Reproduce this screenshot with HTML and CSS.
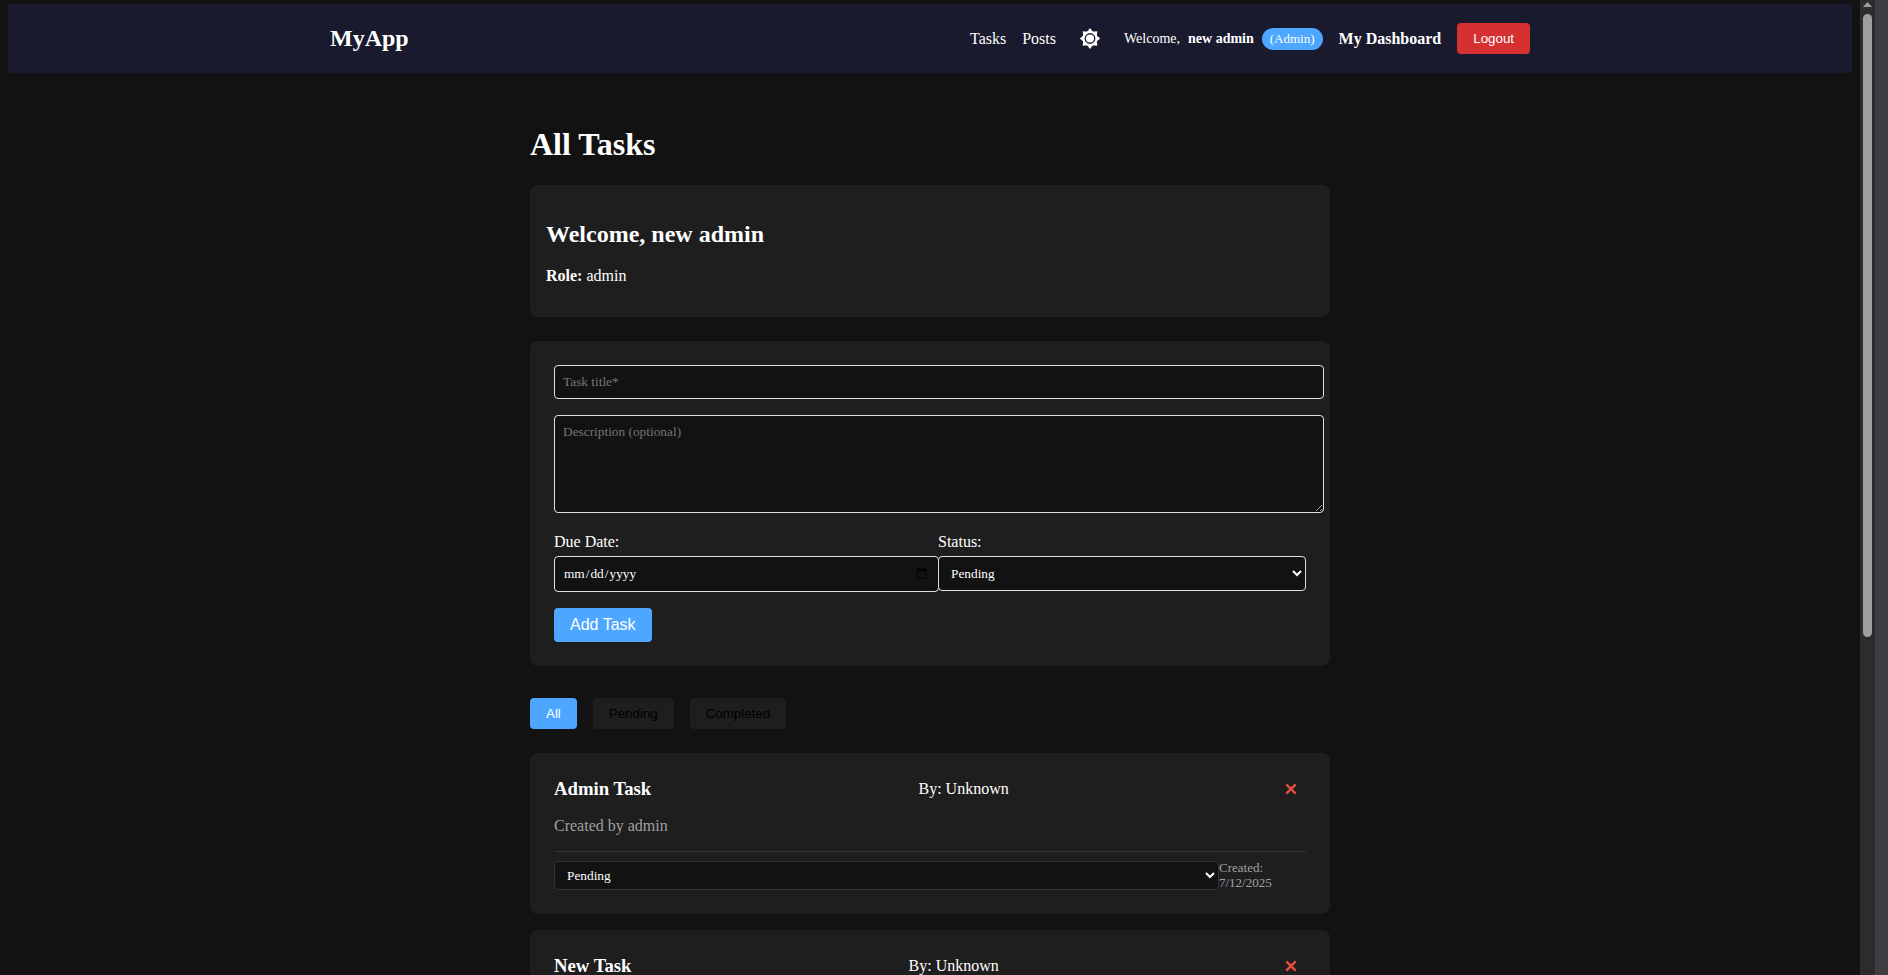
FILE: index.html
```html
<!DOCTYPE html>
<html lang="en">
<head>
<meta charset="utf-8">
<title>MyApp</title>
<link rel="stylesheet" href="styles.css">
</head>
<body>
<div class="page">
  <nav class="navbar">
    <div class="navbar-inner">
      <a class="logo" href="#">MyApp</a>
      <div class="nav-links">
        <a href="#">Tasks</a>
        <a href="#">Posts</a>
        <button class="theme-toggle" type="button" aria-label="Toggle theme">
          <svg width="20" height="21" viewBox="-10 -10.5 20 21"><g fill="#fff"><path id="ray" d="M-3.4-6 0-10.4 3.4-6Z"/><use href="#ray" transform="rotate(45)"/><use href="#ray" transform="rotate(90)"/><use href="#ray" transform="rotate(135)"/><use href="#ray" transform="rotate(180)"/><use href="#ray" transform="rotate(225)"/><use href="#ray" transform="rotate(270)"/><use href="#ray" transform="rotate(315)"/><circle r="4.1"/></g><circle r="6.4" fill="none" stroke="#fff" stroke-width="2"/></svg>
        </button>
        <div class="user-info"><span>Welcome,</span><strong>new admin</strong><span class="badge">(Admin)</span></div>
        <a class="dashboard-link" href="#">My Dashboard</a>
        <button class="btn logout" type="button">Logout</button>
      </div>
    </div>
  </nav>
  <main class="content">
    <h1>All Tasks</h1>
    <section class="card welcome">
      <h2>Welcome, new admin</h2>
      <p><strong>Role:</strong> admin</p>
    </section>
    <form class="card task-form">
      <input class="field wide" type="text" placeholder="Task title*" aria-label="Task title">
      <textarea class="field wide description" placeholder="Description (optional)" aria-label="Description"></textarea>
      <div class="form-row">
        <div class="group group-date">
          <label for="due">Due Date:</label>
          <input class="field" id="due" type="date">
        </div>
        <div class="group group-status">
          <label for="status">Status:</label>
          <select class="field" id="status"><option>Pending</option><option>Completed</option></select>
        </div>
      </div>
      <button class="btn add" type="button">Add Task</button>
    </form>
    <div class="filters">
      <button class="btn filter active" type="button">All</button>
      <button class="btn filter" type="button">Pending</button>
      <button class="btn filter" type="button">Completed</button>
    </div>
    <div class="tasks">
      <article class="card task">
        <header class="task-header">
          <h3>Admin Task</h3>
          <span>By: Unknown</span>
          <button class="delete" type="button" aria-label="Delete Admin Task"><svg width="12" height="12" viewBox="0 0 12 12"><path d="M1.3 1.3 10.7 10.7M10.7 1.3 1.3 10.7"/></svg></button>
        </header>
        <p class="task-text">Created by admin</p>
        <footer class="task-footer">
          <select class="field compact" aria-label="Status of Admin Task"><option>Pending</option><option>Completed</option></select>
          <span class="created">Created: 7/12/2025</span>
        </footer>
      </article>
      <article class="card task">
        <header class="task-header">
          <h3>New Task</h3>
          <span>By: Unknown</span>
          <button class="delete" type="button" aria-label="Delete New Task"><svg width="12" height="12" viewBox="0 0 12 12"><path d="M1.3 1.3 10.7 10.7M10.7 1.3 1.3 10.7"/></svg></button>
        </header>
      </article>
    </div>
  </main>
</div>
<div class="scrollbar" aria-hidden="true">
  <svg width="9" height="5" viewBox="0 0 9 5"><path d="M4.5 0 9 5H0Z" fill="#9f9f9f"/></svg>
  <div class="thumb"></div>
</div>
<div class="edge"></div>
</body>
</html>
```
FILE: styles.css
```css
body {
  margin: 0;
  height: 100vh;
  display: flex;
  overflow: hidden;
  background: #121212;
  color: #fff;
  font-family: "Liberation Serif", "Times New Roman", serif;
  font-size: 16px;
}
.page {
  flex: 1;
  padding: 4px 8px 0;
  overflow: hidden;
}
a {
  color: inherit;
  text-decoration: none;
}
h1, h2, h3, p { margin: 0; }

.navbar {
  padding: 16px;
  background: #1a1a2e;
}
.navbar-inner {
  display: flex;
  justify-content: space-between;
  align-items: center;
  max-width: 1200px;
  min-height: 37px;
  margin: 0 auto;
}
.logo {
  font-size: 24px;
  font-weight: bold;
}
.nav-links {
  display: flex;
  align-items: center;
  gap: 16px;
}
.theme-toggle {
  display: flex;
  padding: 8px;
  border: 0;
  background: none;
}
.user-info {
  display: flex;
  align-items: center;
  gap: 8px;
  font-size: 14px;
}
.badge {
  padding: 3px 8px;
  border-radius: 12px;
  background: #4da6ff;
  font-size: 13px;
}
.dashboard-link { font-weight: bold; }
.btn {
  padding: 8px 16px;
  border: 0;
  border-radius: 4px;
  background: #4da6ff;
  color: #fff;
  font-family: "Liberation Sans", Arial, sans-serif;
  line-height: 15px;
}
.logout { background: #d63031; }

.content {
  max-width: 800px;
  margin: 0 auto;
  padding-top: 53px;
}
h1 {
  margin-bottom: 22px;
  font-size: 32px;
  line-height: 37px;
}
.card {
  border-radius: 8px;
  background: #1e1e1e;
}
.welcome {
  margin-bottom: 24px;
  padding: 36px 16px 32px;
}
.welcome h2 {
  margin-bottom: 19px;
  font-size: 24px;
  line-height: 27px;
}
.welcome p { line-height: 18px; }

.task-form {
  display: flex;
  flex-direction: column;
  align-items: flex-start;
  gap: 16px;
  margin-bottom: 32px;
  padding: 24px;
}
.field {
  box-sizing: border-box;
  width: 100%;
  padding: 8px;
  border: 1px solid #e0e0e0;
  border-radius: 4px;
  background: #121212;
  color: #fff;
  font-family: inherit;
}
.wide {
  width: calc(100% + 18px);
  height: 34px;
}
.description { height: 98px; }
.form-row {
  display: flex;
  align-self: stretch;
  padding-top: 4px;
}
.group label {
  display: block;
  margin-bottom: 5px;
  line-height: 18px;
}
.group-date { flex: 384; }
.group-status { flex: 368; }
.group .field { height: 35px; }
.group-date .field {
  display: block;
  width: calc(100% + 1px);
  height: 36px;
}
.add {
  font-size: 16px;
  line-height: 18px;
}

.filters {
  display: flex;
  gap: 16px;
  margin-bottom: 24px;
}
.filter {
  background: #1e1e1e;
  color: #000;
}
.active {
  background: #4da6ff;
  color: #fff;
}

.tasks {
  display: flex;
  flex-direction: column;
  gap: 16px;
}
.task { padding: 24px; }
.task-header {
  display: flex;
  justify-content: space-between;
  align-items: center;
  height: 24px;
}
.delete {
  display: flex;
  padding: 8px 9px;
  border: 0;
  background: none;
}
.delete path {
  stroke: #e74c3c;
  stroke-width: 2.4;
}
.task-text {
  margin: 16px 0;
  color: #a0a0a0;
  line-height: 18px;
}
.task-footer {
  display: flex;
  align-items: center;
  padding-top: 8px;
  border-top: 1px solid #333;
}
.compact {
  flex: 1;
  height: 29px;
  padding: 5px 8px;
  border-color: #333;
}
.created {
  width: 87px;
  color: #a0a0a0;
  font-size: 13px;
  line-height: 15px;
}

.scrollbar {
  display: flex;
  flex-direction: column;
  align-items: center;
  gap: 7px;
  width: 15px;
  padding-top: 2px;
  background: #2c2c2c;
}
.thumb {
  width: 9px;
  height: 64%;
  border-radius: 5px;
  background: #9f9f9f;
}
.edge {
  width: 13px;
  background: #3e3d42;
}
```
